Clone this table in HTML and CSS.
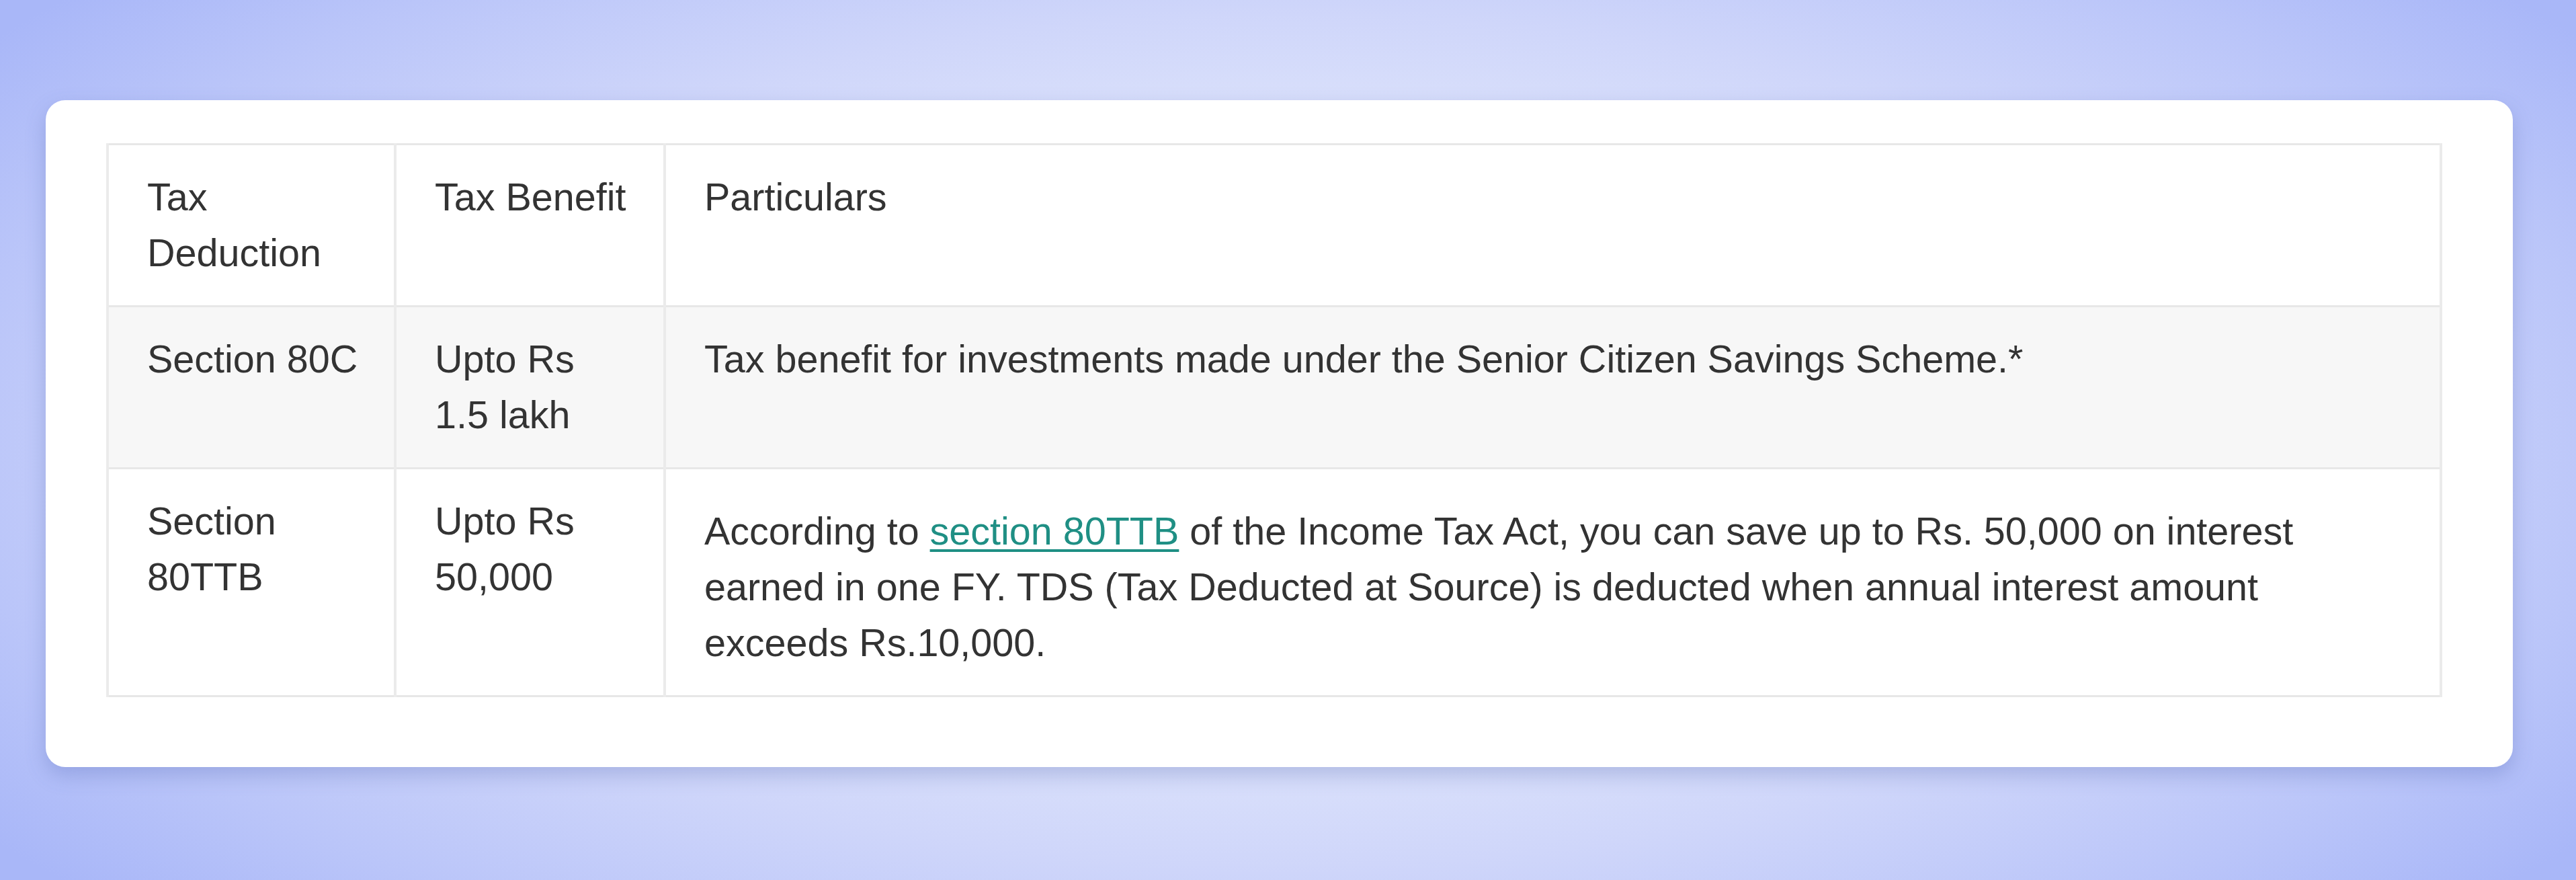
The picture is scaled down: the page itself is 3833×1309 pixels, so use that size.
FILE: index.html
```html
<!DOCTYPE html>
<html lang="en">
<head>
<meta charset="utf-8">
<title>Tax Deduction</title>
<link rel="stylesheet" href="styles.css">
</head>
<body>
<main class="stage">
  <section class="card">
    <table class="tax-table">
      <colgroup>
        <col class="c1">
        <col class="c2">
        <col class="c3">
      </colgroup>
      <tbody>
        <tr class="row">
          <td>Tax<br>Deduction</td>
          <td class="nowrap">Tax Benefit</td>
          <td>Particulars</td>
        </tr>
        <tr class="row alt">
          <td class="nowrap">Section 80C</td>
          <td class="nowrap">Upto Rs<br>1.5 lakh</td>
          <td>Tax benefit for investments made under the Senior Citizen Savings Scheme.*</td>
        </tr>
        <tr class="row">
          <td class="nowrap">Section<br>80TTB</td>
          <td class="nowrap">Upto Rs<br>50,000</td>
          <td class="wide"><p class="para"><span class="seg">According to </span><a class="link" href="#">section 80TTB</a><span class="seg"> of the Income Tax Act, you can save up to Rs. 50,000 on interest</span> <span class="seg">earned in one FY. TDS (Tax Deducted at Source) is deducted when annual interest amount</span> <span class="seg">exceeds Rs.10,000.</span></p></td>
        </tr>
      </tbody>
    </table>
  </section>
</main>
</body>
</html>
```
FILE: styles.css
```css
html, body {
  margin: 0;
  padding: 0;
}

body {
  width: 3833px;
  height: 1309px;
  overflow: hidden;
  font-family: "Liberation Sans", Arial, sans-serif;
  color: #333333;
  background: radial-gradient(ellipse 62% 78% at 50% 50%, #eef2fd 0%, #e3e9fc 35%, #cfd6fa 62%, #bac5f9 84%, #a9b7f8 100%);
}

.stage {
  display: flex;
  padding: 149px 0 0 68px;
}

.card {
  width: 3671px;
  height: 992px;
  box-sizing: border-box;
  background: #ffffff;
  border-radius: 29px;
  padding: 64px 0 0 90px;
  box-shadow: 0 12px 30px rgba(70, 90, 170, 0.28);
}

.tax-table {
  width: 3476px;
  table-layout: fixed;
  border-collapse: collapse;
  font-size: 57.5px;
  line-height: 83px;
}

.c1 { width: 428px; }
.c2 { width: 401px; }

.tax-table td {
  vertical-align: top;
  padding: 36px 20px 36px 57px;
  border-top: 3px solid #e7e7e7;
  border-bottom: 3px solid #e7e7e7;
  border-left: 4px solid #ebebeb;
  border-right: 4px solid #ebebeb;
}

.tax-table td.wide {
  padding-right: 57px;
}

.row {
  background: #ffffff;
}

.row.alt {
  background: #f7f7f7;
}

.nowrap {
  white-space: nowrap;
}

.para {
  margin: 15px 0 0 0;
}

.seg {
  white-space: nowrap;
}

.link {
  color: #1f8f84;
  text-decoration: underline;
  text-decoration-thickness: 4px;
  text-underline-offset: 7px;
}
```
